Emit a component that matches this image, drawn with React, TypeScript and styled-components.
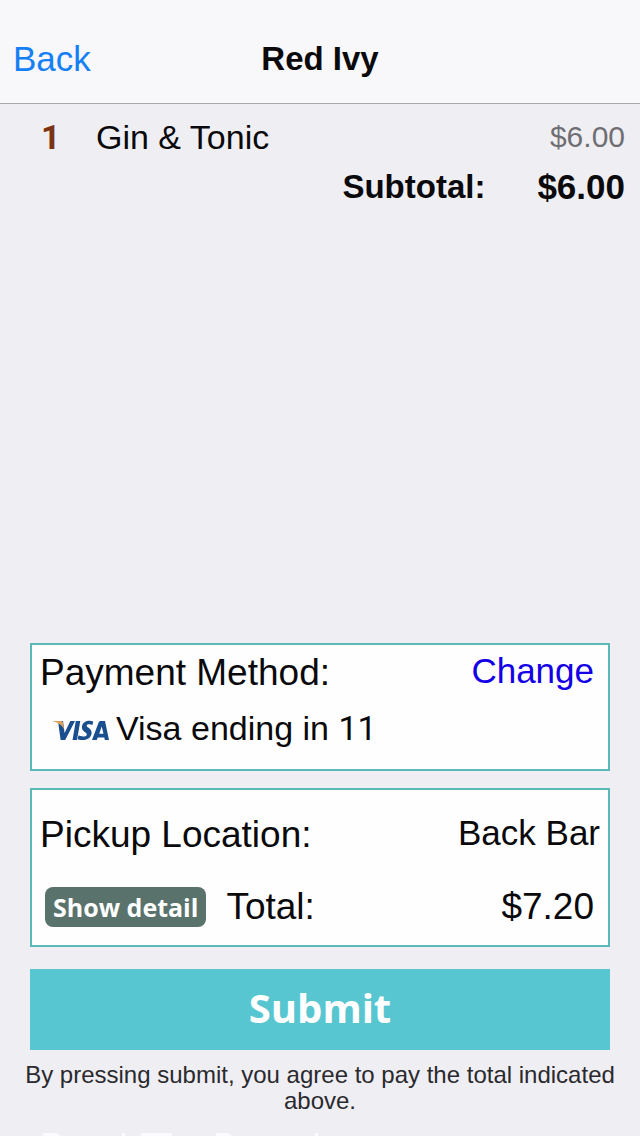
import React from "react";
import styled, { createGlobalStyle } from "styled-components";

const GlobalStyle = createGlobalStyle`
  *, *::before, *::after { box-sizing: border-box; }
  body {
    margin: 0;
    background: #efeef3;
    color: #0a0a0c;
    font-family: "Liberation Sans", Arial, Helvetica, sans-serif;
  }
  button { font-family: inherit; }
`;

const Screen = styled.div`
  display: flex;
  flex-direction: column;
  min-height: 100vh;
`;

const NavBar = styled.header`
  display: grid;
  grid-template-columns: 1fr auto 1fr;
  padding: 37px 13px 22px;
  background: #f8f7f9;
  border-bottom: 1px solid #a8a8ac;
`;

const TextButton = styled.button<{ $color: string; $lineHeight: number }>`
  justify-self: start;
  padding: 0;
  border: 0;
  background: none;
  color: ${(p) => p.$color};
  font-size: 35px;
  line-height: ${(p) => p.$lineHeight}px;
  cursor: pointer;
`;

const Title = styled.h1`
  margin: 0;
  font-size: 33px;
  line-height: 44px;
  font-weight: 700;
`;

const Order = styled.main`
  flex: 1;
  display: flex;
  flex-direction: column;
  gap: 6px;
  padding: 11px 15px 24px 41px;
`;

const OrderRow = styled.div`
  display: flex;
  font-size: 34px;
  line-height: 44px;
`;

const Quantity = styled.span`
  width: 55px;
  color: #7a3414;
  font-family: Roboto, sans-serif;
  font-weight: 700;
`;

const ItemName = styled.span`
  flex: 1;
`;

const ItemPrice = styled.span`
  color: #6f6f73;
  font-size: 30px;
`;

const SubtotalRow = styled(OrderRow)`
  justify-content: flex-end;
  gap: 52px;
  font-size: 33px;
  font-weight: 700;
`;

const SubtotalPrice = styled.span`
  font-size: 35px;
`;

const Checkout = styled.section`
  display: flex;
  flex-direction: column;
  padding: 0 30px;
`;

const Card = styled.div<{ $top: number; $bottom: number; $gap: number }>`
  display: flex;
  flex-direction: column;
  gap: ${(p) => p.$gap}px;
  margin-bottom: 17px;
  padding: ${(p) => p.$top}px 8px ${(p) => p.$bottom}px;
  background: #fefefe;
  border: 2px solid #5bbab8;
`;

const CardRow = styled.div<{ $inset?: boolean }>`
  display: flex;
  align-items: flex-start;
  justify-content: space-between;
  padding-right: ${(p) => (p.$inset ? 6 : 0)}px;
`;

const Label = styled.span`
  font-size: 37px;
  line-height: 44px;
`;

const Value = styled.span`
  font-size: 35px;
  line-height: 40px;
`;

const CardLine = styled.div`
  display: flex;
  align-items: baseline;
  gap: 7px;
  padding-left: 13px;
  font-size: 34px;
  line-height: 44px;
`;

const Digits = styled.span`
  font-family: Roboto, sans-serif;
`;

const TotalGroup = styled.div`
  display: flex;
  align-items: center;
  gap: 20px;
  padding-left: 5px;
`;

const DetailButton = styled.button`
  height: 40px;
  padding: 0 8px;
  border: 0;
  border-radius: 8px;
  background: #5a726c;
  color: #fff;
  font-family: "Open Sans", sans-serif;
  font-size: 25px;
  font-weight: 700;
  line-height: 40px;
  cursor: pointer;
`;

const SubmitButton = styled.button`
  height: 81px;
  margin-top: 5px;
  padding: 0 0 4px;
  border: 0;
  background: #58c6d1;
  color: #fff;
  font-family: "Open Sans", sans-serif;
  font-size: 40px;
  font-weight: 700;
  cursor: pointer;
`;

const Terms = styled.p`
  margin: 12px -10px 19px;
  color: #2a2a2e;
  font-size: 24px;
  line-height: 26px;
  text-align: center;
`;

const FooterEdge = styled.svg`
  display: block;
  width: 320px;
  height: 3px;
`;

const VisaLogo = () => (
  <svg width="56" height="20" viewBox="0 1 56 20" role="img" aria-label="Visa">
    <g fill="#1a4f8f">
      <path d="M5 2H10L11.6 14L17.3 2H22L12.2 21H7.6Z" />
      <path d="M22.8 2H27.3L24 21H19.5Z" />
      <path d="M40.2 2.4L39.5 6.1C37.6 5.2 33.8 4.7 33.7 6.8C33.6 8.8 38.8 9.2 38.6 14C38.4 19.3 33.1 21.3 29 21.1C27.2 21 25.7 20.7 24.7 20.2L25.5 16.3C27.5 17.4 33.5 18.4 33.8 15.4C34 13.2 28.7 12.7 28.9 8C29.2 2.5 35.7 .9 40.2 2.4Z" />
      <path fillRule="evenodd" d="M47.6 2H52L56 21H51.8L51.3 18.4H44.8L43.7 21H39L45.5 3.8C46 2.5 46.6 2 47.6 2ZM48.7 7.4L46.2 14.7H50.5Z" />
    </g>
    <path d="M0 2H7.6C9.3 2 9.8 2.8 10 3.8L11.2 10.6C9.2 6.6 5.8 3.8 0 2.6Z" fill="#dea45c" />
  </svg>
);

export default function App() {
  return (
    <Screen>
      <GlobalStyle />
      <NavBar>
        <TextButton $color="#1580f5" $lineHeight={44}>Back</TextButton>
        <Title>Red Ivy</Title>
      </NavBar>
      <Order>
        <OrderRow>
          <Quantity>1</Quantity>
          <ItemName>Gin &amp; Tonic</ItemName>
          <ItemPrice>$6.00</ItemPrice>
        </OrderRow>
        <SubtotalRow>
          <span>Subtotal:</span>
          <SubtotalPrice>$6.00</SubtotalPrice>
        </SubtotalRow>
      </Order>
      <Checkout>
        <Card $top={6} $bottom={19} $gap={11}>
          <CardRow $inset>
            <Label>Payment Method:</Label>
            <TextButton $color="#1400e6" $lineHeight={40}>Change</TextButton>
          </CardRow>
          <CardLine>
            <VisaLogo />
            <span>Visa ending in <Digits>11</Digits></span>
          </CardLine>
        </Card>
        <Card $top={23} $bottom={16} $gap={28}>
          <CardRow>
            <Label>Pickup Location:</Label>
            <Value>Back Bar</Value>
          </CardRow>
          <CardRow $inset>
            <TotalGroup>
              <DetailButton>Show detail</DetailButton>
              <Label>Total:</Label>
            </TotalGroup>
            <Label>$7.20</Label>
          </CardRow>
        </Card>
        <SubmitButton>Submit</SubmitButton>
        <Terms>By pressing submit, you agree to pay the total indicated above.</Terms>
      </Checkout>
      <FooterEdge viewBox="0 0 320 3" aria-hidden="true">
        <path d="M43 0H57L61 3H43ZM122 0H125V3H122ZM141 0H172V3H141ZM216 0H228L232 3H216ZM315 0H318V3H315Z" fill="#fbfbfd" />
      </FooterEdge>
    </Screen>
  );
}
